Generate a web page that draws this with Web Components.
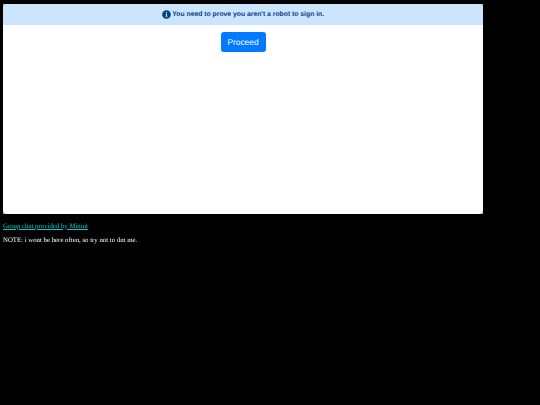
<!DOCTYPE html>
<html>
<head>
<meta charset="utf-8">
<title>Group chat</title>
<style>
  html { background: #000; }
  body {
    margin: 0;
    padding: 4px 3px 0;
    color: #fff;
    font-family: "Liberation Serif", serif;
    font-size: 6.8px;
    text-rendering: geometricPrecision;
    filter: blur(0.3px);
  }
</style>
</head>
<body>
<chat-frame>
  <robot-alert>You need to prove you aren't a robot to sign in.</robot-alert>
  <proceed-button>Proceed</proceed-button>
</chat-frame>
<page-note href="#" link="Group chat provided by Minnit">NOTE: i wont be here often, so try not to dm me.</page-note>

<script>
class ChatFrame extends HTMLElement {
  constructor() {
    super();
    const shadow = this.attachShadow({ mode: 'open' });
    shadow.innerHTML = `
      <style>
        :host {
          display: block;
          width: 480px;
          height: 210px;
          background: #b4b4b4;
          overflow: hidden;
        }
        .inner {
          height: 100%;
          background: #fff;
          border-radius: 4.5px;
          overflow: hidden;
          font-family: "Liberation Sans", Arial, sans-serif;
        }
      </style>
      <div class="inner"><slot></slot></div>
    `;
  }
}

class RobotAlert extends HTMLElement {
  constructor() {
    super();
    const shadow = this.attachShadow({ mode: 'open' });
    shadow.innerHTML = `
      <style>
        :host {
          display: flex;
          justify-content: center;
          align-items: center;
          gap: 1.5px;
          height: 21px;
          background: #cce5ff;
          color: #004085;
          font-size: 6.8px;
          font-weight: bold;
        }
        svg { width: 9px; height: 9px; fill: currentColor; }
      </style>
      <svg viewBox="0 0 512 512"><path d="M256 8C119 8 8 119 8 256s111 248 248 248 248-111 248-248S393 8 256 8zm0 110a42 42 0 1 1 0 84 42 42 0 0 1 0-84zm56 254c0 7-5 12-12 12h-88c-7 0-12-5-12-12v-24c0-7 5-12 12-12h12v-64h-12c-7 0-12-5-12-12v-24c0-7 5-12 12-12h64c7 0 12 5 12 12v100h12c7 0 12 5 12 12z"/></svg>
      <span><slot></slot></span>
    `;
  }
}

class ProceedButton extends HTMLElement {
  constructor() {
    super();
    const shadow = this.attachShadow({ mode: 'open' });
    shadow.innerHTML = `
      <style>
        :host {
          display: flex;
          justify-content: center;
          padding-top: 7px;
        }
        button {
          width: 45px;
          height: 20px;
          padding: 0;
          border: 1px solid #007bff;
          border-radius: 2.4px;
          background: #007bff;
          color: #fff;
          font: 8.4px "Liberation Sans", Arial, sans-serif;
          text-rendering: geometricPrecision;
        }
      </style>
      <button type="button"><slot></slot></button>
    `;
  }
}

class PageNote extends HTMLElement {
  constructor() {
    super();
    const shadow = this.attachShadow({ mode: 'open' });
    shadow.innerHTML = `
      <style>
        :host { display: block; padding-top: 8.5px; }
        p { margin: 0 0 6.5px; line-height: 8px; }
        a { color: #00cdcd; }
      </style>
      <p><a></a></p>
      <p><slot></slot></p>
    `;
    const a = shadow.querySelector('a');
    a.href = this.getAttribute('href');
    a.textContent = this.getAttribute('link');
  }
}

customElements.define('chat-frame', ChatFrame);
customElements.define('robot-alert', RobotAlert);
customElements.define('proceed-button', ProceedButton);
customElements.define('page-note', PageNote);
</script>
</body>
</html>
